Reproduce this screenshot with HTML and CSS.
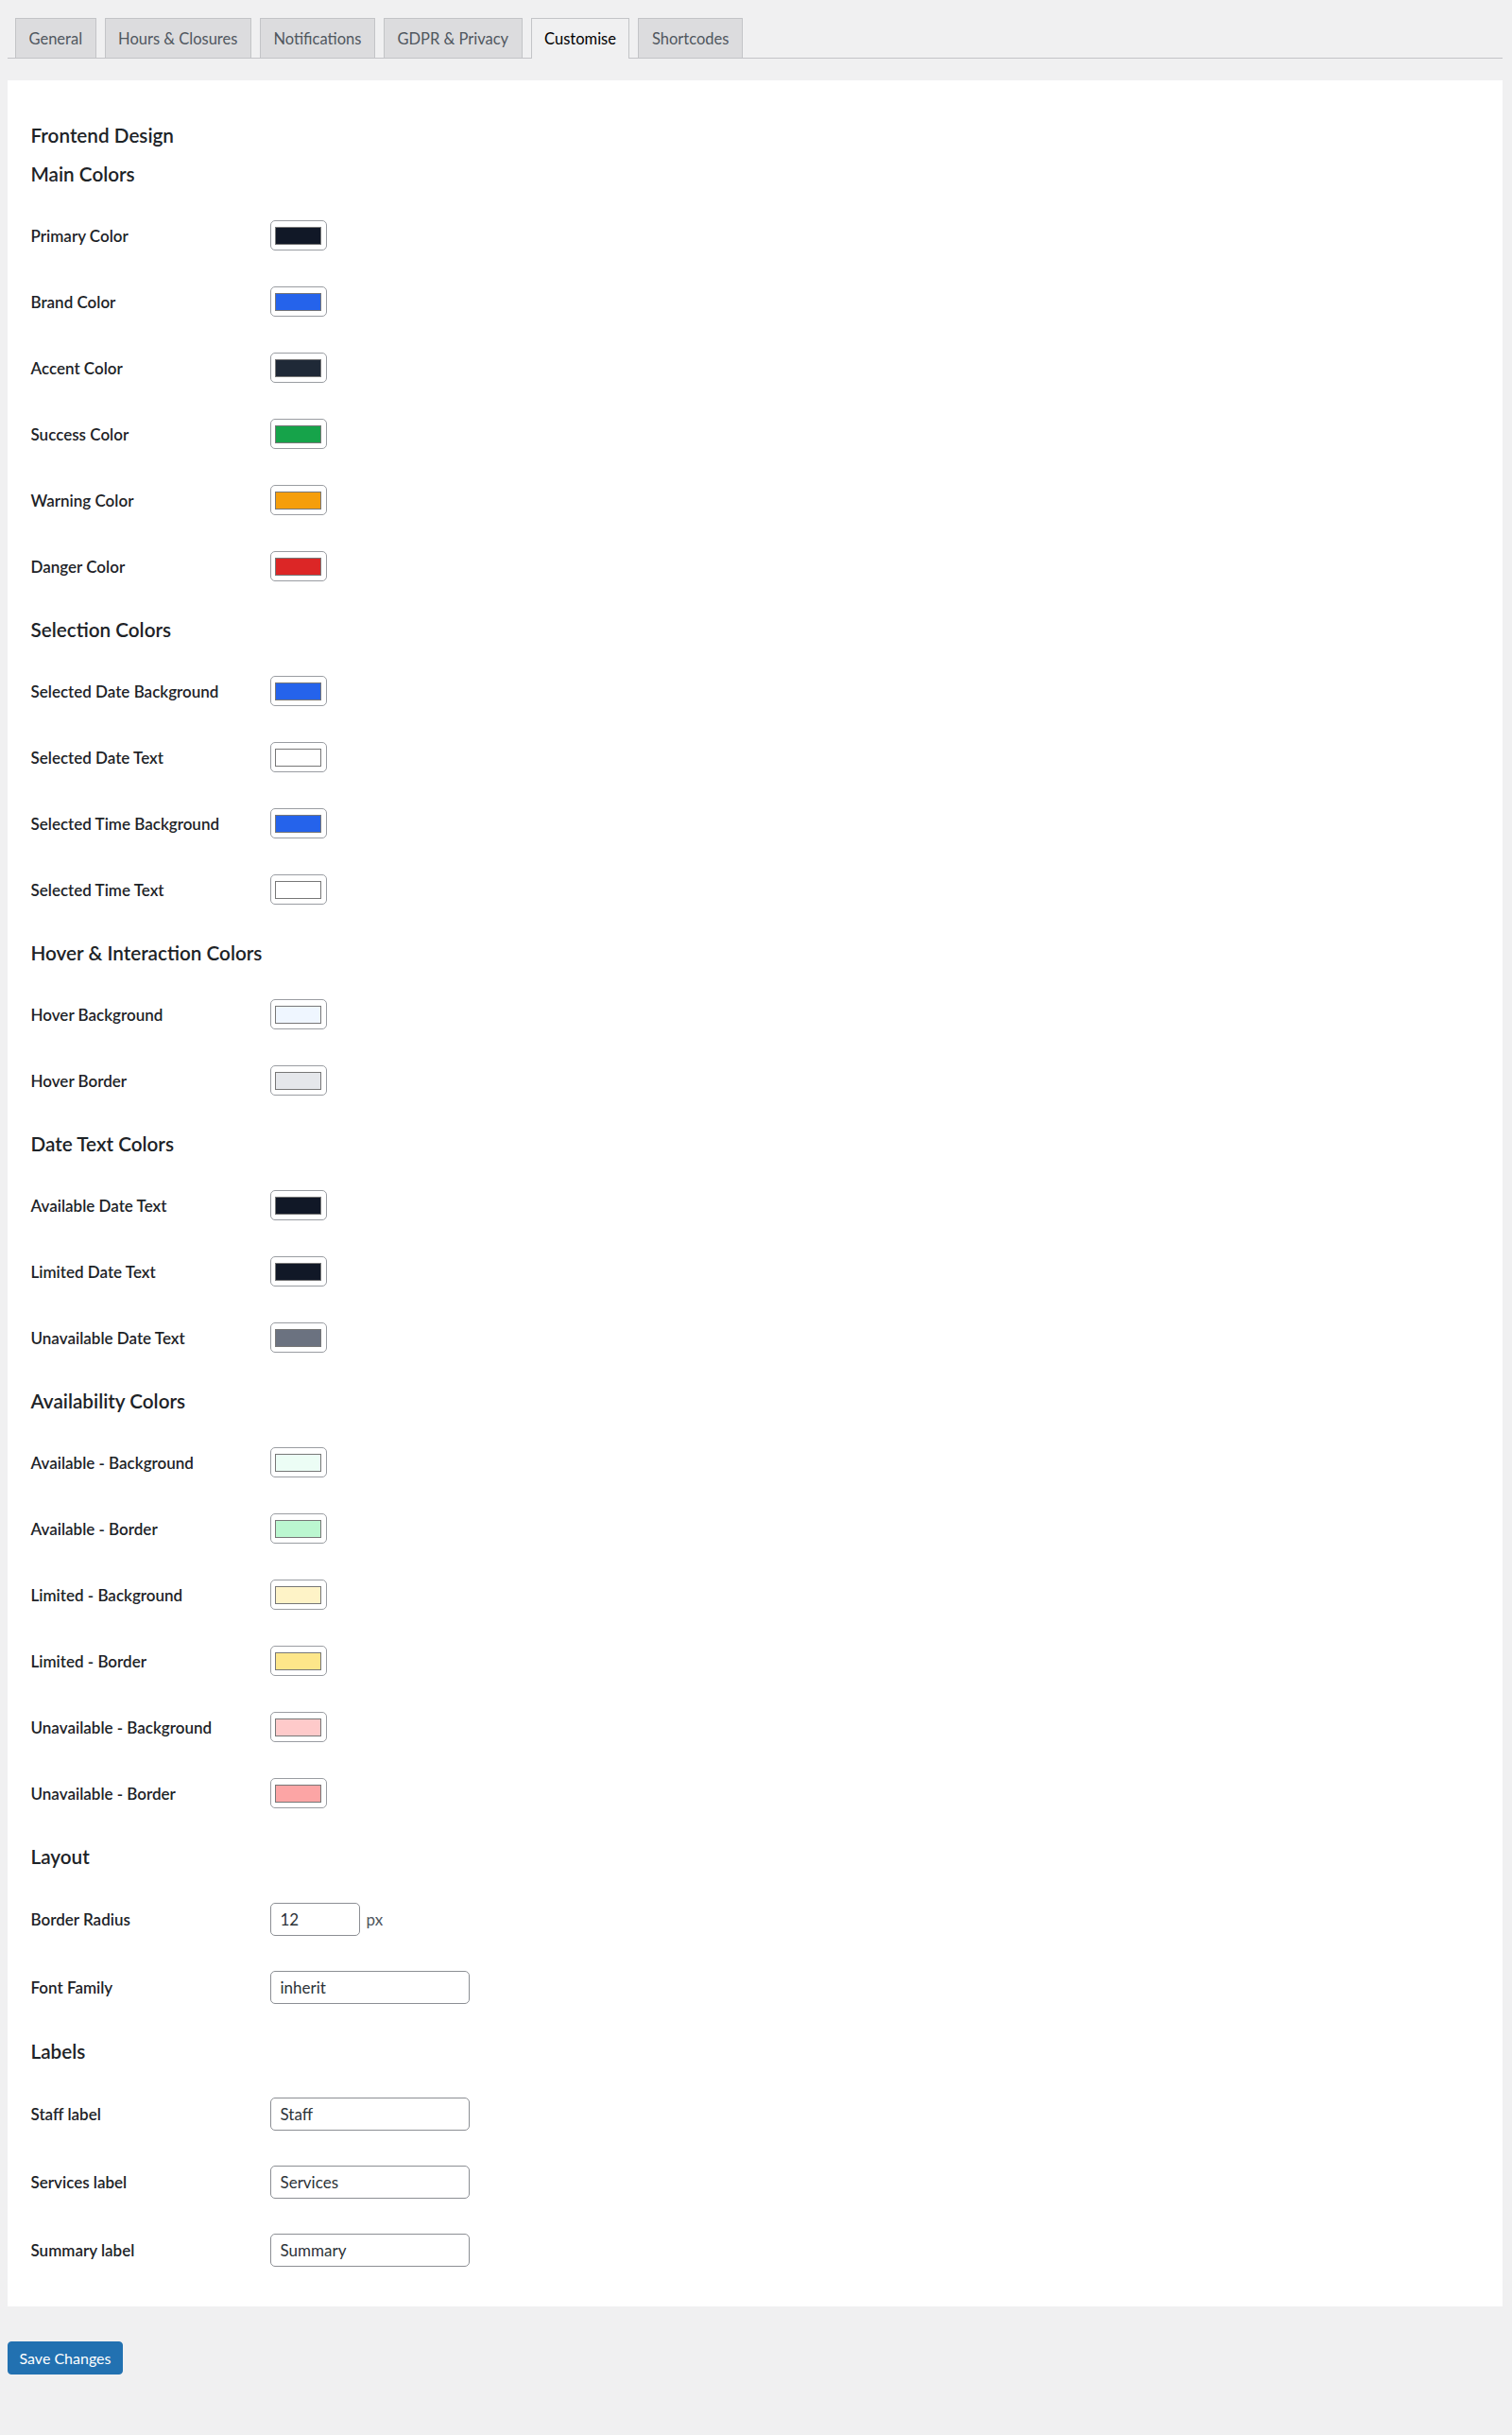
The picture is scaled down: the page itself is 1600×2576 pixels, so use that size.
FILE: index.html
```html
<!DOCTYPE html>
<html lang="en">
<head>
<meta charset="utf-8">
<title>Customise</title>
<link rel="stylesheet" href="styles.css">
</head>
<body>
<div class="wrap">
  <nav class="tabs">
    <a class="tab">General</a>
    <a class="tab">Hours &amp; Closures</a>
    <a class="tab">Notifications</a>
    <a class="tab">GDPR &amp; Privacy</a>
    <a class="tab tab-active">Customise</a>
    <a class="tab">Shortcodes</a>
  </nav>

  <form class="panel">
    <h2 class="title">Frontend Design</h2>

    <h3 class="section section-first">Main Colors</h3>
    <div class="rows">
      <div class="row"><span class="label">Primary Color</span><span class="swatch"><span class="chip" style="background:#111827"></span></span></div>
      <div class="row"><span class="label">Brand Color</span><span class="swatch"><span class="chip" style="background:#2563eb"></span></span></div>
      <div class="row"><span class="label">Accent Color</span><span class="swatch"><span class="chip" style="background:#1f2937"></span></span></div>
      <div class="row"><span class="label">Success Color</span><span class="swatch"><span class="chip" style="background:#16a34a"></span></span></div>
      <div class="row"><span class="label">Warning Color</span><span class="swatch"><span class="chip" style="background:#f59e0b"></span></span></div>
      <div class="row"><span class="label">Danger Color</span><span class="swatch"><span class="chip" style="background:#dc2626"></span></span></div>
    </div>

    <h3 class="section">Selection Colors</h3>
    <div class="rows">
      <div class="row"><span class="label">Selected Date Background</span><span class="swatch"><span class="chip" style="background:#2563eb"></span></span></div>
      <div class="row"><span class="label">Selected Date Text</span><span class="swatch"><span class="chip" style="background:#ffffff"></span></span></div>
      <div class="row"><span class="label">Selected Time Background</span><span class="swatch"><span class="chip" style="background:#2563eb"></span></span></div>
      <div class="row"><span class="label">Selected Time Text</span><span class="swatch"><span class="chip" style="background:#ffffff"></span></span></div>
    </div>

    <h3 class="section">Hover &amp; Interaction Colors</h3>
    <div class="rows">
      <div class="row"><span class="label">Hover Background</span><span class="swatch"><span class="chip" style="background:#eff6ff"></span></span></div>
      <div class="row"><span class="label">Hover Border</span><span class="swatch"><span class="chip" style="background:#e5e7eb"></span></span></div>
    </div>

    <h3 class="section">Date Text Colors</h3>
    <div class="rows">
      <div class="row"><span class="label">Available Date Text</span><span class="swatch"><span class="chip" style="background:#111827"></span></span></div>
      <div class="row"><span class="label">Limited Date Text</span><span class="swatch"><span class="chip" style="background:#111827"></span></span></div>
      <div class="row"><span class="label">Unavailable Date Text</span><span class="swatch"><span class="chip" style="background:#6b7280"></span></span></div>
    </div>

    <h3 class="section">Availability Colors</h3>
    <div class="rows">
      <div class="row"><span class="label">Available - Background</span><span class="swatch"><span class="chip" style="background:#ecfdf5"></span></span></div>
      <div class="row"><span class="label">Available - Border</span><span class="swatch"><span class="chip" style="background:#bbf7d0"></span></span></div>
      <div class="row"><span class="label">Limited - Background</span><span class="swatch"><span class="chip" style="background:#fef3c7"></span></span></div>
      <div class="row"><span class="label">Limited - Border</span><span class="swatch"><span class="chip" style="background:#fde68a"></span></span></div>
      <div class="row"><span class="label">Unavailable - Background</span><span class="swatch"><span class="chip" style="background:#fecaca"></span></span></div>
      <div class="row"><span class="label">Unavailable - Border</span><span class="swatch"><span class="chip" style="background:#fca5a5"></span></span></div>
    </div>

    <h3 class="section">Layout</h3>
    <div class="rows">
      <div class="row row-input"><span class="label">Border Radius</span><span class="control"><input class="text small" type="text" value="12"><span class="unit">px</span></span></div>
      <div class="row row-input"><span class="label">Font Family</span><span class="control"><input class="text" type="text" value="inherit"></span></div>
    </div>

    <h3 class="section">Labels</h3>
    <div class="rows">
      <div class="row row-input"><span class="label">Staff label</span><span class="control"><input class="text" type="text" value="Staff"></span></div>
      <div class="row row-input"><span class="label">Services label</span><span class="control"><input class="text" type="text" value="Services"></span></div>
      <div class="row row-input"><span class="label">Summary label</span><span class="control"><input class="text" type="text" value="Summary"></span></div>
    </div>
  </form>

  <div class="submit">
    <button class="button-primary" type="button">Save Changes</button>
  </div>
</div>
</body>
</html>
```

FILE: styles.css
```css
html {
  background: #f0f0f1;
}

body {
  margin: 0;
  background: #f0f0f1;
  color: #1d2327;
  font-family: Lato, "Noto Sans", "Liberation Sans", sans-serif;
  font-size: 17px;
}

.wrap {
  padding: 19px 10px 40px 8px;
}

/* Tabs */
.tabs {
  display: flex;
  align-items: flex-end;
  gap: 9px;
  padding-left: 8px;
  border-bottom: 1px solid #c3c4c7;
  height: 42px;
}

.tab {
  box-sizing: border-box;
  height: 42px;
  padding: 0 13.5px;
  display: flex;
  align-items: center;
  background: #dcdcde;
  border: 1px solid #c3c4c7;
  border-bottom: none;
  color: #50575e;
  font-size: 16.5px;
  white-space: nowrap;
}

.tab-active {
  height: 43px;
  margin-bottom: -1px;
  padding-bottom: 1px;
  background: #f0f0f1;
  color: #000;
}

/* Panel */
.panel {
  margin: 23px 0 0;
  background: #fff;
  padding: 43px 24px 24px 24.5px;
}

.title,
.section {
  margin: 0;
  height: 30px;
  line-height: 30px;
  font-size: 20.7px;
  font-weight: 600;
  color: #1d2327;
}

.section {
  margin: 17px 0 15px;
}

.section-first {
  margin-top: 11px;
}

.row {
  display: flex;
  align-items: center;
  height: 70px;
}

.row-input {
  height: 72px;
}

.label {
  width: 253px;
  flex: none;
  font-size: 17px;
  font-weight: 600;
  color: #1d2327;
}

.swatch {
  box-sizing: border-box;
  width: 60px;
  height: 32px;
  border: 1px solid #9a9da2;
  border-radius: 5px;
  background: #fff;
  display: flex;
  align-items: center;
  justify-content: center;
}

.chip {
  box-sizing: border-box;
  width: 49px;
  height: 19px;
  border: 1px solid #777;
}

.control {
  display: flex;
  align-items: center;
}

.text {
  box-sizing: border-box;
  width: 211px;
  height: 35px;
  margin: 0;
  padding: 0 10px;
  border: 1px solid #8c8f94;
  border-radius: 5px;
  background: #fff;
  color: #2c3338;
  font-family: Lato, "Noto Sans", "Liberation Sans", sans-serif;
  font-size: 17px;
}

.text.small {
  width: 95px;
}

.unit {
  margin-left: 7px;
  color: #50575e;
  font-size: 17px;
}

/* Submit */
.submit {
  margin-top: 37px;
}

.button-primary {
  box-sizing: border-box;
  height: 35px;
  padding: 0 11.5px;
  background: #2271b1;
  border: 1px solid #2271b1;
  border-radius: 4px;
  color: #fff;
  font-family: Lato, "Noto Sans", "Liberation Sans", sans-serif;
  font-size: 16px;
  cursor: pointer;
}
```
